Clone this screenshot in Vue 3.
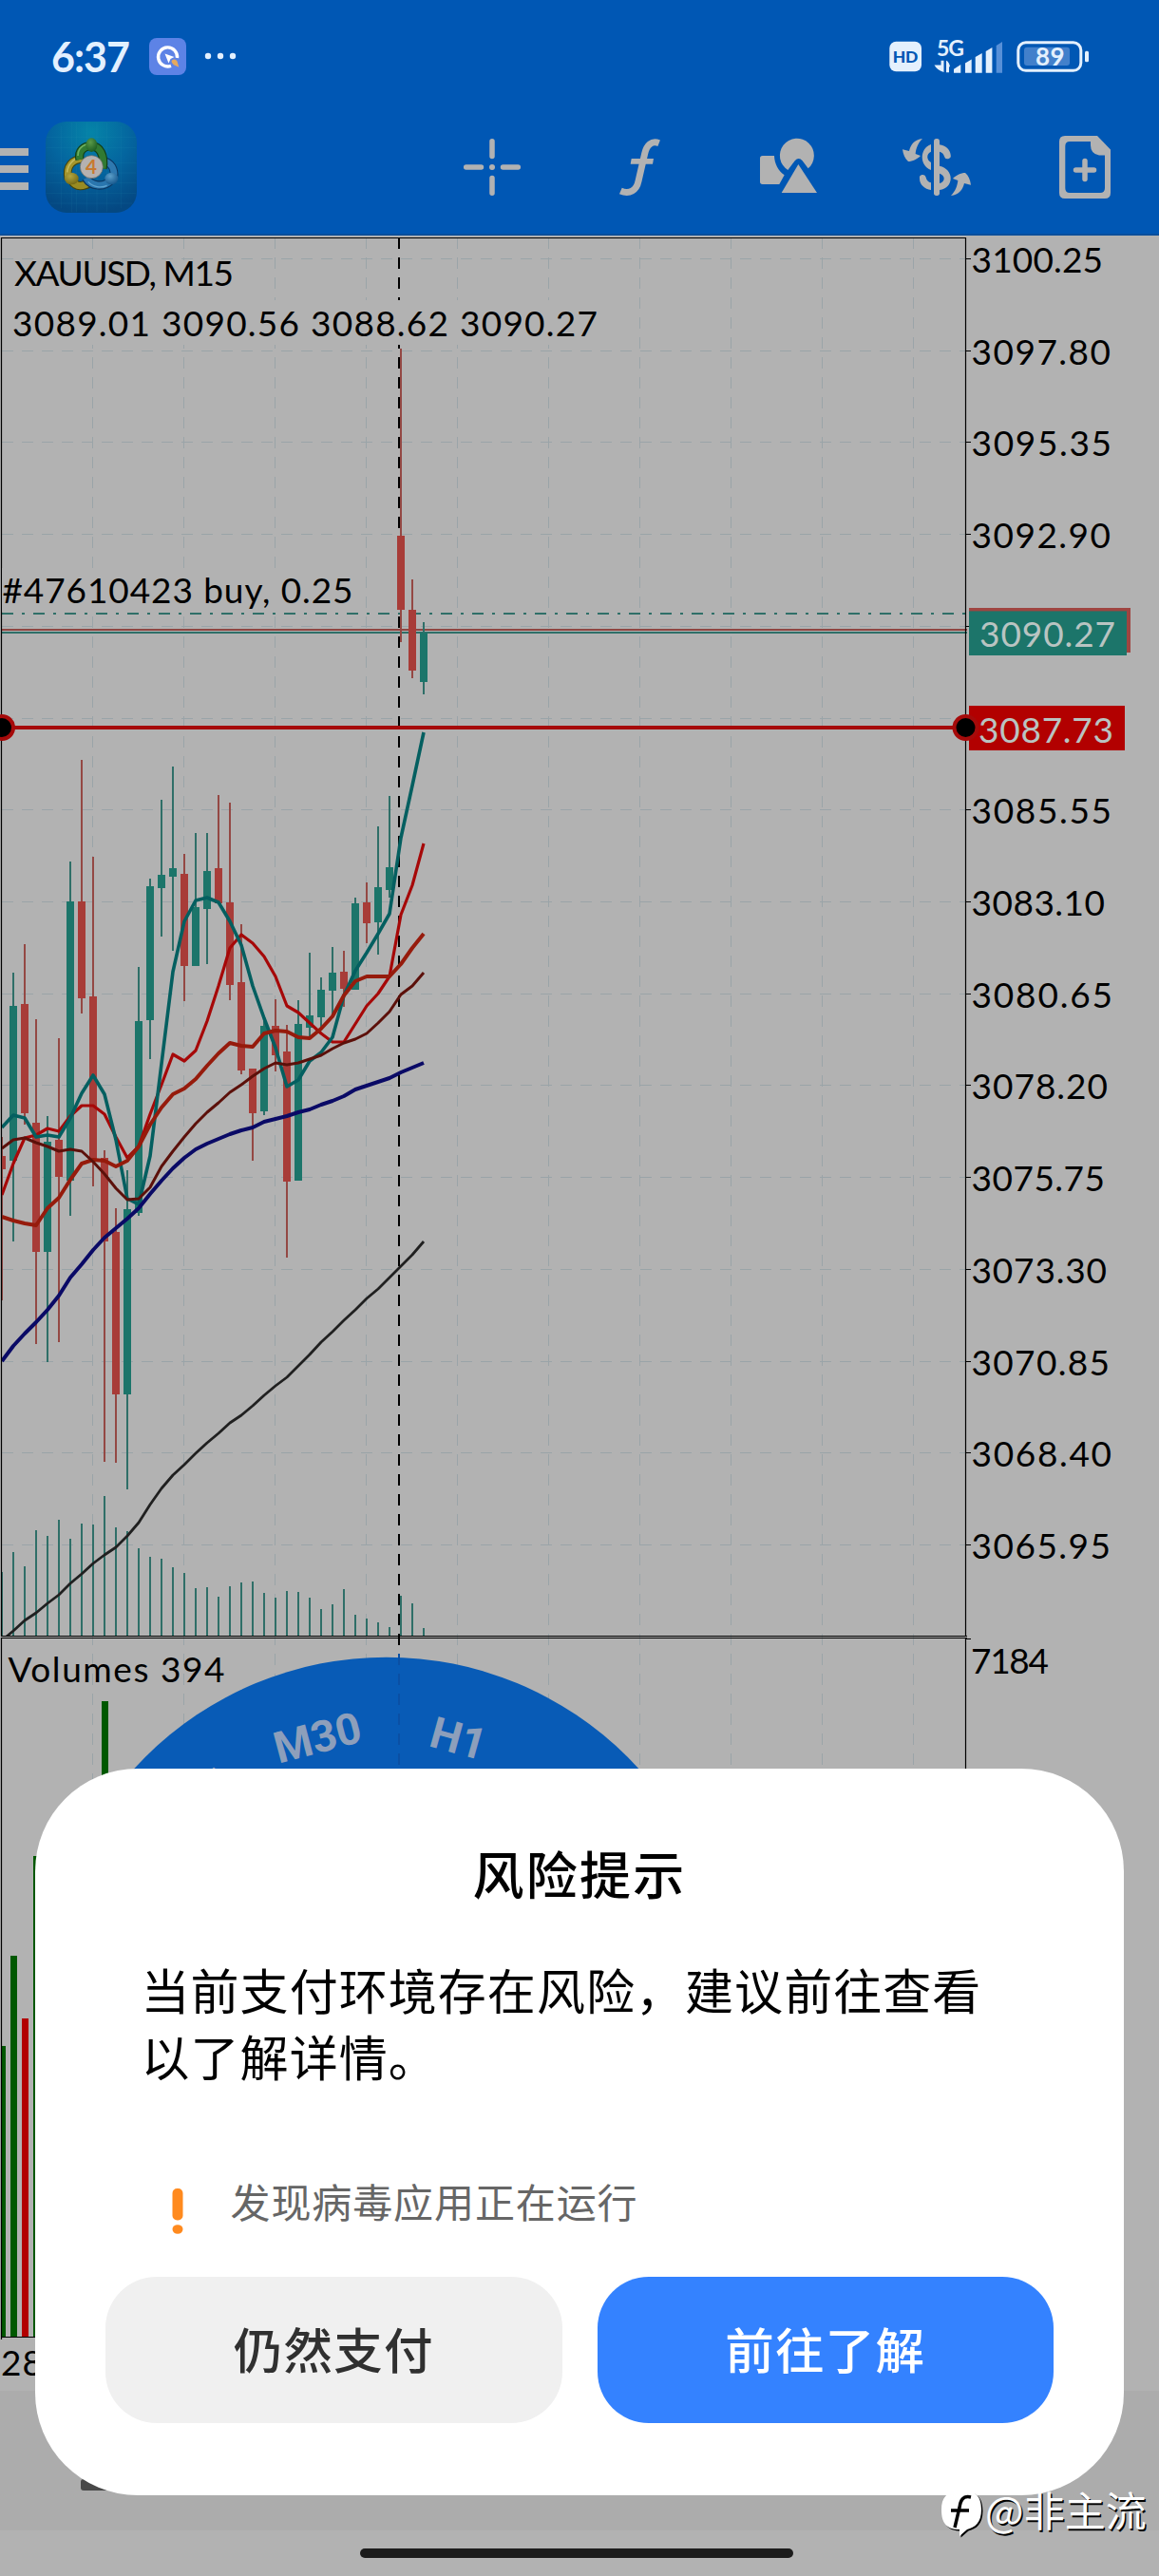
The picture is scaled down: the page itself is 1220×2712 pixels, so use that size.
<script setup>
import { computed } from "vue"

const STEP = 12
const barX = (i) => 2 + i * STEP

//Escala de precios
const priceLabels = [
    { text: "3100.25", end: 1160 },
    { text: "3097.80", end: 1168 },
    { text: "3095.35", end: 1169 },
    { text: "3092.90", end: 1168 },
    null,
    null,
    { text: "3085.55", end: 1169 },
    { text: "3083.10", end: 1162 },
    { text: "3080.65", end: 1170 },
    { text: "3078.20", end: 1165 },
    { text: "3075.75", end: 1162 },
    { text: "3073.30", end: 1164 },
    { text: "3070.85", end: 1167 },
    { text: "3068.40", end: 1169 },
    { text: "3065.95", end: 1168 },
]

const rows = priceLabels.map((label, i) => ({ label, y: Math.round(272 + i * 96.72) + 0.5 }))
const columns = Array.from({ length: 10 }, (_, i) => 97.5 + i * 96)

//[high, top, bottom, low, up]
const candles = [
    [1197, 1217, 1231, 1369, 0],
    [1024, 1059, 1222, 1307, 1],
    [994, 1057, 1172, 1184, 0],
    [1073, 1182, 1318, 1415, 0],
    [1175, 1202, 1318, 1434, 1],
    [1093, 1200, 1239, 1413, 0],
    [907, 949, 1243, 1280, 1],
    [800, 949, 1051, 1067, 0],
    [902, 1049, 1220, 1249, 0],
    [1211, 1219, 1307, 1539, 0],
    [1272, 1297, 1468, 1540, 0],
    [1232, 1273, 1468, 1568, 1],
    [1018, 1075, 1277, 1280, 1],
    [925, 933, 1074, 1115, 1],
    [842, 921, 935, 986, 1],
    [807, 914, 923, 1001, 1],
    [899, 920, 1017, 1054, 0],
    [877, 955, 1017, 1017, 1],
    [877, 917, 957, 1015, 1],
    [837, 914, 951, 951, 0],
    [845, 950, 1037, 1053, 0],
    [973, 1034, 1127, 1131, 0],
    [1125, 1125, 1172, 1222, 0],
    [1075, 1080, 1170, 1174, 1],
    [1052, 1080, 1111, 1128, 0],
    [1079, 1107, 1244, 1324, 0],
    [1053, 1078, 1243, 1243, 1],
    [1003, 1069, 1082, 1092, 1],
    [1029, 1042, 1071, 1085, 1],
    [997, 1024, 1043, 1070, 1],
    [1001, 1023, 1041, 1060, 0],
    [945, 951, 1042, 1042, 1],
    [929, 950, 972, 993, 0],
    [870, 934, 971, 1005, 1],
    [838, 913, 937, 945, 1],
    [367, 564, 642, 676, 0],
    [610, 642, 706, 714, 0],
    [655, 666, 718, 731, 1],
]

const ticks = [
    1655, 1634, 1649, 1611, 1617, 1600, 1620, 1604, 1605, 1575, 1608, 1612, 1630,
    1639, 1641, 1650, 1656, 1672, 1671, 1681, 1670, 1666, 1665, 1677, 1682, 1675,
    1676, 1682, 1694, 1689, 1673, 1700, 1704, 1708, 1713, 1680, 1688, 1714,
]

//Medias moviles, un valor por vela
const averages = [
    {
        color: "#a60808", width: 3.2,
        values: [1258, 1225, 1198, 1195, 1188, 1191, 1175, 1164, 1164, 1173, 1197, 1219, 1207, 1173, 1142, 1110, 1117, 1106, 1075, 1038, 998, 984, 993, 1007, 1028, 1059, 1066, 1077, 1088, 1097, 1097, 1078, 1059, 1046, 1028, 963, 932, 888],
    },
    {
        color: "#045f60", width: 3.6,
        values: [1187, 1174, 1177, 1197, 1195, 1197, 1177, 1151, 1132, 1152, 1200, 1262, 1268, 1217, 1120, 1023, 970, 948, 945, 950, 970, 995, 1038, 1072, 1103, 1144, 1137, 1117, 1108, 1092, 1048, 1022, 1003, 983, 962, 882, 827, 771],
    },
    {
        color: "#961b0c", width: 4,
        values: [1281, 1285, 1288, 1290, 1272, 1261, 1242, 1225, 1221, 1222, 1228, 1222, 1207, 1184, 1166, 1152, 1146, 1136, 1122, 1109, 1098, 1101, 1102, 1088, 1085, 1086, 1092, 1093, 1083, 1070, 1048, 1033, 1028, 1028, 1028, 1015, 998, 983],
    },
    {
        color: "#5c100a", width: 3,
        values: [1209, 1200, 1198, 1203, 1207, 1212, 1210, 1212, 1223, 1236, 1251, 1263, 1262, 1250, 1228, 1212, 1197, 1183, 1171, 1161, 1150, 1142, 1133, 1125, 1119, 1121, 1119, 1115, 1111, 1104, 1098, 1094, 1088, 1077, 1065, 1047, 1038, 1024],
    },
    {
        color: "#0a0a66", width: 4,
        values: [1433, 1417, 1404, 1392, 1379, 1364, 1345, 1331, 1316, 1303, 1293, 1283, 1272, 1257, 1243, 1230, 1219, 1210, 1204, 1199, 1194, 1190, 1187, 1181, 1178, 1175, 1171, 1168, 1163, 1159, 1154, 1147, 1143, 1139, 1135, 1129, 1124, 1119],
    },
    {
        color: "#202020", width: 2.8,
        values: [1727, 1717, 1706, 1698, 1688, 1679, 1667, 1657, 1646, 1637, 1629, 1617, 1603, 1584, 1567, 1553, 1542, 1530, 1519, 1509, 1498, 1490, 1480, 1469, 1459, 1450, 1438, 1426, 1413, 1402, 1390, 1379, 1367, 1357, 1345, 1333, 1321, 1307],
    },
]

const lines = computed(() => averages.map((a) => ({
    ...a,
    points: a.values.map((y, i) => `${barX(i)},${y}`).join(" "),
})))

const volumes = [
    { x: 2, w: 4, y: 2154, color: "#005800" },
    { x: 11, w: 7, y: 2059, color: "#005800" },
    { x: 23, w: 7, y: 2125, color: "#b20000" },
    { x: 35, w: 7, y: 1954, color: "#005800" },
    { x: 107, w: 7, y: 1791, color: "#005800" },
]

const wheel = [
    { text: "M15", angle: -45 },
    { text: "M30", angle: -14.8 },
    { text: "H1", angle: 15.5 },
]
</script>

<template>
    <div class="screen">
        <header class="header">
            <div class="status">
                <svg class="status-left" viewBox="0 30 260 60">
                    <text x="54" y="75.500" class="clock" textLength="83">6:37</text>
                    <rect x="157" y="40" width="39" height="39" rx="8" fill="#5d83e6" />
                    <path d="M180 69.300A10 10 0 1 1 186.500 61" fill="none" stroke="#fff" stroke-width="3.400" />
                    <path d="M173.500 56.500L183.500 60L179.500 62L177.500 66.500Z" fill="#fff" />
                    <path d="M180.500 64q3.500-3 6 .5l1.800 6.200l-5.400-2.400q-2.500-1.800-2.400-4.300z" fill="#e5a95e" />
                    <g fill="#e3f0ff">
                        <circle cx="219" cy="59" r="3.200" />
                        <circle cx="232" cy="59" r="3.200" />
                        <circle cx="245" cy="59" r="3.200" />
                    </g>
                </svg>
                <svg class="status-right" viewBox="920 30 300 60" fill="#e4f0fd">
                    <rect x="936.300" y="43.700" width="33.700" height="31.500" rx="7" />
                    <text x="939.800" y="65.800" class="hd" textLength="26.500">HD</text>
                    <text x="986" y="58.700" class="net" textLength="29">5G</text>
                    <path d="M990.500 63.700h3v12.300q-7-2-10-7.500h7zM996 63.700q3 1 4 6.500h-1v6h-3z" />
                    <path d="M1004 76.700v-4l7.300-4.700v8.700zM1016 76.700V66.500l6.700-4v14.200zM1026.700 76.700V60l7-4v20.700zM1037.700 76.700V54l6.700-4v26.700z" />
                    <path d="M1048.700 76.700V48l6.300-4v32.700z" fill="#5790d8" />
                    <rect x="1078" y="49.700" width="48" height="19.300" rx="3" fill="#4280cb" />
                    <rect x="1071.800" y="44.800" width="66" height="29.500" rx="8" fill="none" stroke="#e4f0fd" stroke-width="3" />
                    <rect x="1142" y="53.700" width="4" height="11.600" rx="1.500" />
                    <text x="1090" y="69" class="battery" textLength="30.500">89</text>
                </svg>
            </div>
            <nav class="toolbar">
                <div class="menu">
                    <span></span>
                    <span></span>
                    <span></span>
                </div>
                <svg class="app-icon" viewBox="0 0 288 288">
                    <defs>
                        <radialGradient id="appBg" cx=".5" cy=".12" r=".88">
                            <stop offset="0" stop-color="#0584a8" />
                            <stop offset=".5" stop-color="#04659f" />
                            <stop offset="1" stop-color="#044882" />
                        </radialGradient>
                        <radialGradient id="gGreen" cx=".4" cy=".3" r=".8">
                            <stop offset="0" stop-color="#5a9a49" />
                            <stop offset="1" stop-color="#14551d" />
                        </radialGradient>
                        <radialGradient id="gYellow" cx=".4" cy=".3" r=".8">
                            <stop offset="0" stop-color="#b3a641" />
                            <stop offset="1" stop-color="#6d6310" />
                        </radialGradient>
                        <radialGradient id="gBlue" cx=".4" cy=".3" r=".8">
                            <stop offset="0" stop-color="#5c9fca" />
                            <stop offset="1" stop-color="#0d4f86" />
                        </radialGradient>
                    </defs>
                    <rect width="288" height="288" rx="66" fill="url(#appBg)" />
                    <path d="M50 14V274M82 2V286M98 2V286M130 2V286M162 2V286M194 2V286M238 14V274M2 50H286M2 82H286M2 130H286M2 162H286M2 194H286M2 226H286M14 258H274" stroke="#3c9cba" stroke-opacity=".16" stroke-width="2" />
                    <g fill="none">
                        <path d="M72 182C62 140 86 118 118 118" stroke="#44430c" stroke-width="26" />
                        <path d="M72 182C62 140 86 118 118 118" stroke="#a3952c" stroke-width="20" />
                        <path d="M68 160C70 136 88 116 112 113" stroke="#c4b95c" stroke-width="5" />
                        <path d="M84 188C96 208 120 206 142 192" stroke="#44430c" stroke-width="28" />
                        <path d="M84 188C96 208 120 206 142 192" stroke="#998b22" stroke-width="22" />
                        <path d="M190 126C214 136 220 160 214 182" stroke="#0b3560" stroke-width="26" />
                        <path d="M190 126C214 136 220 160 214 182" stroke="#2f79b0" stroke-width="20" />
                        <path d="M128 178C144 206 184 208 206 186" stroke="#0b3560" stroke-width="28" />
                        <path d="M128 178C144 206 184 208 206 186" stroke="#2a76ae" stroke-width="21" />
                        <path d="M134 190C150 208 176 210 194 202" stroke="#5fa3d0" stroke-width="4" />
                        <path d="M108 120C102 92 122 76 144 78C170 76 188 106 180 148" stroke="#123f17" stroke-width="28" />
                        <path d="M108 120C102 92 122 76 144 78C170 76 188 106 180 148" stroke="#317a32" stroke-width="21" />
                        <path d="M102 108C102 86 116 76 128 72" stroke="#6fb062" stroke-width="5" />
                    </g>
                    <ellipse cx="145" cy="74" rx="18" ry="22" fill="url(#gGreen)" />
                    <ellipse cx="82" cy="180" rx="22" ry="19" fill="url(#gYellow)" />
                    <ellipse cx="208" cy="180" rx="21" ry="19" fill="url(#gBlue)" />
                    <circle cx="145" cy="143" r="36" fill="#b5b1b0" stroke="#6b6a60" stroke-width="2" />
                    <text x="144" y="165" class="app-digit">4</text>
                </svg>
                <div class="tools">
                    <svg class="tool" viewBox="478 136 80 80" fill="none" stroke="#b2b2b2" stroke-width="5.500" stroke-linecap="round">
                        <path d="M518 148.800V164.500M518 187.500V203.300M490.700 176H506.500M529.500 176H545.300" />
                        <circle cx="518" cy="176" r="3" fill="#b2b2b2" stroke="none" />
                    </svg>
                    <svg class="tool" viewBox="-18 318 240 240">
                        <path d="M161 362C138 353 122 368 116 395L96 482C90 511 68 525 40 513" fill="none" stroke="#b2b2b2" stroke-width="21" />
                        <path d="M74 411H144L141 428H71Z" fill="#b2b2b2" />
                    </svg>
                    <svg class="tool" viewBox="450 318 240 240" fill="#b2b2b2">
                        <path d="M488 402H525C526 428 538 450 557 463L541 492H488Q480 492 480 484V410Q480 402 488 402Z" />
                        <path d="M568 447A54 54 0 1 1 632 442L614 418Q602 404 590 418Z" />
                        <path d="M601 429L660 519H548Z" />
                    </svg>
                    <svg class="tool" viewBox="918 318 240 240" fill="#b2b2b2">
                        <rect x="1029" y="348" width="18" height="180" rx="8" />
                        <path d="M1020 366V389C1005 396 1005 414 1020 423V447C984 434 982 380 1020 366Z" />
                        <path d="M1047 367C1066 370 1080 382 1082 399A10 10 0 0 1 1062 404C1060 396 1055 391 1047 389Z" />
                        <path d="M1047 434C1094 444 1094 504 1047 510V489C1066 484 1066 464 1047 458Z" />
                        <path d="M984 474A10 10 0 0 1 1004 470C1006 480 1012 485 1020 487V510C1000 507 984 494 984 474Z" />
                        <path id="swap" d="M993 348C968 350 955 368 951 387L930 382C932 398 938 412 948 420C962 420 978 412 987 402L971 396C973 378 979 362 993 348Z" />
                        <use href="#swap" transform="rotate(180 1038 438)" />
                    </svg>
                    <svg class="tool" viewBox="1102 136 80 80">
                        <path d="M1121 143H1155L1169 157.500V203Q1169 209 1163 209H1121Q1115 209 1115 203V149Q1115 143 1121 143ZM1126 149Q1121.300 149 1121.300 154V198Q1121.300 203 1126 203H1158Q1163 203 1163 198V163.500H1157Q1148 162 1148 153V149Z" fill="#b2b2b2" fill-rule="evenodd" />
                        <path d="M1142 169.500V188.500M1132.500 179H1151.500" stroke="#b2b2b2" stroke-width="5.500" stroke-linecap="round" />
                    </svg>
                </div>
            </nav>
        </header>

        <svg class="chart" viewBox="0 248 1220 2269">
            <!-- Rejilla -->
            <g stroke="#9aa4a8" stroke-width="1" stroke-dasharray="12 9">
                <line v-for="x in columns" :key="x" :x1="x" :x2="x" y1="250" y2="2460" />
                <line v-for="row in rows" :key="row.y" x1="2" x2="1016" :y1="row.y" :y2="row.y" />
            </g>
            <line x1="420" x2="420" y1="250" y2="2460" stroke="#000" stroke-width="2" stroke-dasharray="12 9" />

            <g>
                <rect v-for="(y, i) in ticks" :key="i" :x="barX(i) - 1" :y="y" width="2" :height="1722 - y" fill="#2f6f68" />
            </g>

            <!-- Niveles -->
            <line x1="2" x2="1016" y1="646" y2="646" stroke="#2f6f68" stroke-width="2" stroke-dasharray="12 9 3 9" />
            <line x1="2" x2="1018" y1="663" y2="663" stroke="#8f4642" stroke-width="2" />
            <line x1="2" x2="1018" y1="666" y2="666" stroke="#2f6f68" stroke-width="2" />

            <g v-for="(c, i) in candles" :key="'c' + i">
                <rect :x="barX(i) - 1" :y="c[0]" width="2" :height="c[3] - c[0]" :fill="c[4] ? '#2f6f68' : '#944844'" />
                <rect :x="barX(i) - 4" :y="c[1]" width="8" :height="c[2] - c[1]" :fill="c[4] ? '#1c756a' : '#a83c38'" />
            </g>

            <polyline v-for="l in lines" :key="l.color" :points="l.points" fill="none" :stroke="l.color" :stroke-width="l.width" stroke-linejoin="round" />
            <rect x="2" y="1723" width="14" height="8" fill="#b2b2b2" />
            <rect x="0" y="1000" width="1" height="720" fill="#b2b2b2" />

            <rect v-for="v in volumes" :key="v.x" :x="v.x" :y="v.y" :width="v.w" :height="2460 - v.y" :fill="v.color" />

            <!-- Marcos -->
            <path d="M1.500 1722.500V250.500H1016.500V1722.500M1 1722.500H1018M1 1724.500H1018M1.500 1724V2463M1016.500 1724V2460M1 2460.500H1018M1016 1725.500H1022" fill="none" stroke="#000" stroke-width="1.200" />
            <path v-for="row in rows" :key="'t' + row.y" :d="`M1016 ${row.y}H1022`" stroke="#000" stroke-width="1" />

            <!-- Textos -->
            <rect x="12" y="274" width="236" height="42" fill="#b2b2b2" />
            <rect x="12" y="316" width="620" height="47" fill="#b2b2b2" />
            <rect x="2.200" y="598" width="370" height="46" fill="#b2b2b2" />
            <text x="15" y="301" textLength="231">XAUUSD, M15</text>
            <text x="13" y="354" textLength="616">3089.01 3090.56 3088.62 3090.27</text>
            <text x="2.500" y="635" textLength="369">#47610423 buy, 0.25</text>
            <text x="8.500" y="1771" textLength="228">Volumes 394</text>
            <text x="1" y="2501" textLength="44">28</text>

            <g v-for="row in rows" :key="'p' + row.y">
                <text v-if="row.label" x="1022.500" :y="row.y + 14.500" :textLength="row.label.end - 1021.5">{{ row.label.text }}</text>
            </g>
            <text x="1022" y="1762" textLength="82">7184</text>

            <rect x="1020" y="640" width="170" height="47" fill="#9f4541" />
            <rect x="1020" y="643.400" width="166" height="46.600" fill="#1c756a" />
            <text x="1031" y="681" textLength="143" class="tag">3090.27</text>

            <line x1="0" x2="1016" y1="766" y2="766" stroke="#a60a0a" stroke-width="4" />
            <rect x="1020" y="743" width="164" height="47" fill="#b20000" />
            <text x="1030" y="782" textLength="142" class="tag">3087.73</text>
            <g stroke="#a60a0a" stroke-width="4">
                <circle cx="2" cy="766" r="12" />
                <circle cx="1016.500" cy="766" r="12" />
            </g>

            <!-- Selector de periodo -->
            <circle cx="406.800" cy="2104" r="359.300" fill="#085bb6" />
            <line x1="420" x2="420" y1="1741" y2="1880" stroke="#0a50a4" stroke-width="2" stroke-dasharray="12 9" />
            <text v-for="w in wheel" :key="w.text" class="period" x="406.800" y="1836" :transform="`rotate(${w.angle} 406.800 2104)`">{{ w.text }}</text>
        </svg>

        <div class="tabs">
            <span class="tab-mark"></span>
        </div>
        <div class="home">
            <span class="home-bar"></span>
        </div>

        <section class="dialog">
            <h2 class="dialog-title">风险提示</h2>
            <p class="dialog-text">当前支付环境存在风险，建议前往查看<br>以了解详情。</p>
            <div class="dialog-warning">
                <svg class="warning-icon" viewBox="0 0 12 48">
                    <rect x=".5" width="11" height="33.500" rx="5" fill="#ff8a1e" />
                    <ellipse cx="6" cy="43" rx="5.500" ry="4.800" fill="#ff8a1e" />
                </svg>
                <span>发现病毒应用正在运行</span>
            </div>
            <div class="dialog-actions">
                <button class="btn">仍然支付</button>
                <button class="btn btn-primary">前往了解</button>
            </div>
        </section>

        <div class="watermark">
            <svg class="watermark-icon" viewBox="0 0 46 54">
                <path d="M20 2C38 0 43 10 43 22C43 36 36 41 28 43L20 50V43C6 43 1 36 1 22C1 10 6 3 20 2Z" fill="#000" transform="translate(1.500 1.500)" />
                <path d="M20 2C38 0 43 10 43 22C43 36 36 41 28 43L20 50V43C6 43 1 36 1 22C1 10 6 3 20 2Z" fill="#fff" />
                <path d="M32 9C24 7 21 12 20 20L15 41M11 23H30" fill="none" stroke="#000" stroke-width="3.500" />
            </svg>
            <span>@非主流</span>
        </div>
    </div>
</template>

<style>
body {
    background-color: #b2b2b2;
}
</style>

<style scoped>
.screen {
    position: relative;
    display: flex;
    flex-direction: column;
    width: 1220px;
    height: 2712px;
    overflow: hidden;
    background-color: #b2b2b2;
    font-family: Lato, "Noto Sans CJK SC", sans-serif;
}

.header {
    display: flex;
    flex-direction: column;
    flex: none;
    box-sizing: border-box;
    height: 248px;
    background-color: #0057b4;
    border-bottom: 2px solid #0a4f9c;
}

.status {
    display: flex;
    justify-content: space-between;
    align-items: center;
    height: 120px;
}

.status-left {
    width: 260px;
    height: 60px;
}

.status-right {
    width: 300px;
    height: 60px;
}

.clock {
    font-size: 43px;
    font-weight: 700;
    fill: #e3f0ff;
}

.hd {
    font-size: 17.5px;
    font-weight: 900;
    fill: #0057b4;
}

.net {
    font-size: 23px;
    font-weight: 700;
}

.battery {
    font-size: 26px;
    font-weight: 700;
}

.toolbar {
    display: flex;
    align-items: center;
    height: 112px;
}

.menu {
    display: flex;
    flex-direction: column;
    gap: 10px;
    margin-top: 4px;
}

.menu span {
    width: 30px;
    height: 8px;
    background-color: #b2b2b2;
}

.app-icon {
    width: 96px;
    height: 96px;
    margin-left: 18px;
}

.app-digit {
    font-size: 62px;
    font-weight: 700;
    text-anchor: middle;
    fill: #c8792f;
}

.tools {
    display: flex;
    margin-left: auto;
}

.tool {
    width: 80px;
    height: 80px;
    padding: 0 38px;
}

.chart {
    display: block;
    flex: none;
    width: 1220px;
    height: 2269px;
    font-size: 37px;
}

.tag {
    fill: #b9c4c2;
}

.period {
    font-family: Roboto, sans-serif;
    font-size: 46px;
    font-weight: 700;
    text-anchor: middle;
    fill: #8d9fbb;
}

.tabs {
    display: flex;
    align-items: flex-end;
    box-sizing: border-box;
    flex: none;
    height: 147px;
    padding: 0 0 42px 85px;
    background-color: #acacac;
}

.tab-mark {
    width: 40px;
    height: 12px;
    border-radius: 3px;
    background-color: #484848;
}

.home {
    display: flex;
    justify-content: center;
    align-items: center;
    flex: 1;
}

.home-bar {
    width: 456px;
    height: 10px;
    margin-right: 6px;
    border-radius: 5px;
    background-color: #1c1c1c;
}

.dialog {
    position: absolute;
    left: 37px;
    top: 1862px;
    box-sizing: border-box;
    width: 1146px;
    height: 765px;
    padding: 83px 74px 0;
    border-radius: 108px;
    background-color: #fff;
}

.dialog-title {
    margin: 0;
    font-size: 54px;
    font-weight: 500;
    line-height: 60px;
    letter-spacing: 2.2px;
    text-align: center;
    color: #000;
}

.dialog-text {
    margin: 57px 0 0 37.5px;
    font-size: 51px;
    line-height: 69.5px;
    letter-spacing: 1.05px;
    white-space: nowrap;
    color: #000;
}

.dialog-warning {
    display: flex;
    align-items: flex-start;
    gap: 50px;
    height: 50px;
    margin: 93px 0 0 69.5px;
    font-size: 42px;
    line-height: 50px;
    letter-spacing: 0.9px;
    color: #666;
}

.warning-icon {
    width: 12px;
    height: 48px;
    margin-top: 10px;
}

.dialog-actions {
    display: flex;
    gap: 37px;
    margin-top: 53px;
}

.btn {
    all: unset;
    flex: 1;
    height: 154px;
    border-radius: 54px;
    background-color: #f0f0f0;
    color: #303030;
    font-size: 51.5px;
    font-weight: 500;
    line-height: 154px;
    letter-spacing: 1.3px;
    text-align: center;
    cursor: pointer;
}

.btn-primary {
    background-color: #3482ff;
    color: #fff;
}

.watermark {
    position: absolute;
    left: 990px;
    top: 2612px;
    display: flex;
    align-items: center;
    gap: 1px;
    height: 58px;
    font-family: "Noto Sans CJK SC", sans-serif;
    font-size: 43px;
    line-height: 58px;
    color: #fff;
    text-shadow: 1.5px 1.5px 0 #000;
}

.watermark-icon {
    width: 46px;
    height: 54px;
    margin-top: 12px;
}
</style>
